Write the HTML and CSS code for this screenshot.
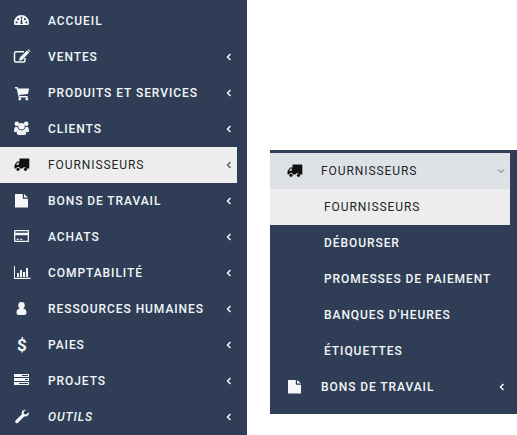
FILE: index.html
```html
<!DOCTYPE html>
<html lang="fr">
<head>
    <meta charset="UTF-8">
    <meta name="viewport" content="width=device-width, initial-scale=1.0">
    <title>Menu</title>
    <link rel="stylesheet" href="styles.css">
</head>
<body>
    <svg class="defs" aria-hidden="true">
        <symbol id="i-gauge" viewBox="0 0 18 16">
            <path fill-rule="evenodd" d="M8.500 2C4.400 2 1 5.300 1 9.500c0 1 .2 1.700.6 2.500h13.800c.4-.8.6-1.500.6-2.500C16 5.300 12.600 2 8.500 2zM7.600 3.800h1.800v1.800H7.600zM4.200 5.200H6V7H4.200zM11 5.200h1.800V7H11zM2.700 8.400h1.800v1.800H2.700zM12.500 8.400h1.800v1.800h-1.800zM7.700 8.500l.5-2.700h.6l.5 2.700.3 2.500H7.400z"/>
        </symbol>
        <symbol id="i-edit" viewBox="0 0 18 16">
            <path fill="none" stroke="currentColor" stroke-width="1.500" d="M11 2.800H3a1.500 1.500 0 0 0-1.500 1.500v7.200A1.500 1.500 0 0 0 3 13h7.500a1.500 1.500 0 0 0 1.500-1.500V9"/>
            <path d="M14 1.600l2.200 2-7 7.300-3.200.9.800-3.200zM14.700 1l.8-.7 2 2-.7.800z"/>
        </symbol>
        <symbol id="i-cart" viewBox="0 0 18 16">
            <path d="M2 2h2.600l.4 1.500h11.200l-1.300 5.500-8.600 1 .3 1h8.200v1.400H5.700L3.600 3.400H2z"/>
            <circle cx="6.800" cy="14" r="1.400"/>
            <circle cx="13.800" cy="14" r="1.400"/>
        </symbol>
        <symbol id="i-group" viewBox="0 0 18 16">
            <circle cx="3.800" cy="2.800" r="2.300"/>
            <circle cx="13.200" cy="2.800" r="2.300"/>
            <circle cx="8.500" cy="5.300" r="3.200"/>
            <path d="M1 10.200C1 7.500 1.800 5.800 3 5.800l1.500.5 1 2.200C4.500 9 3.800 10 3.700 11H1.500c-.3 0-.5-.4-.5-.8zM16 10.200c0-2.700-.8-4.400-2-4.400l-1.500.5-1 2.200c1 .5 1.700 1.500 1.800 2.500h2.200c.3 0 .5-.4.500-.8z"/>
            <path d="M5.500 8c.8.900 1.800 1.400 3 1.400s2.200-.5 3-1.400c1.100.4 1.700 2.200 1.700 4 0 1.300-.7 2-2 2H5.800c-1.300 0-2-.7-2-2 0-1.800.6-3.600 1.700-4z"/>
        </symbol>
        <symbol id="i-truck" viewBox="0 0 18 16">
            <path fill-rule="evenodd" d="M6.500 1.500h9.200a.6.6 0 0 1 .6.600v9.400h-3.100a2 2 0 0 0-3.700 0H7a2 2 0 0 0-2.600-1.200c-.9.300-1.300.7-1.500 1.200H2a.6.6 0 0 1-.5-.6V8l2.600-3.500h2.400zM3 7.800h2.800V5.600H4.600z"/>
            <circle cx="5" cy="12.300" r="1.600"/>
            <circle cx="12.500" cy="12.300" r="1.600"/>
        </symbol>
        <symbol id="i-file" viewBox="0 0 18 16">
            <path d="M2 1h7.800v4.700H15V14.500H2z"/>
            <path d="M11 1l4 3.500h-4z"/>
        </symbol>
        <symbol id="i-card" viewBox="0 0 18 16">
            <path fill-rule="evenodd" d="M2 1h13a1 1 0 0 1 1 1v10a1 1 0 0 1-1 1H2a1 1 0 0 1-1-1V2a1 1 0 0 1 1-1zM2.300 2.200v1.600h12.400V2.200zM2.300 6.300v5.500h12.400V6.300zM3.500 9.800h2.600v1H3.500zM7 9.800h2.500v1H7z"/>
        </symbol>
        <symbol id="i-chart" viewBox="0 0 18 16">
            <path d="M1 1h1v11.800h15.500V14H1zM4 8h2v4H4zM7 5h2v7H7zM10 7h2v5h-2zM13 3h2v9h-2z"/>
        </symbol>
        <symbol id="i-user" viewBox="0 0 18 16">
            <path d="M8.500 1a3.200 3.200 0 0 1 3.200 3.400c0 1.300-.6 2.400-1.500 3 2.200.3 3.300 1.900 3.300 4.200 0 1.300-.7 2.400-2 2.400H5.500c-1.300 0-2-1.100-2-2.400 0-2.300 1.100-3.900 3.300-4.200-.9-.6-1.500-1.700-1.500-3A3.200 3.200 0 0 1 8.500 1z"/>
        </symbol>
        <symbol id="i-server" viewBox="0 0 18 16">
            <path fill-rule="evenodd" d="M1 1h15v3H1zM9 2v1h6V2zM1 5h15v3H1zM12 6v1h3V6zM1 9h15v3H1zM6 10v1h9v-1z"/>
        </symbol>
        <symbol id="i-wrench" viewBox="0 0 18 16">
            <path d="M16 3.300c.3 2.400-1.300 4.300-3.500 4.300-.5 0-.9 0-1.300-.2l-6 6.200c-.7.800-1.800.8-2.500.1s-.7-1.800.1-2.500l6.100-6c-.2-.5-.3-1-.2-1.500.2-2 2-3.300 4.200-3l-2.300 2.200.5 2.100 2 .5z"/>
        </symbol>
        <symbol id="i-left" viewBox="0 0 6 8">
            <path fill="none" stroke="currentColor" stroke-width="1.500" d="M4.500 1L1.500 4l3 3"/>
        </symbol>
        <symbol id="i-down" viewBox="0 0 8 6">
            <path fill="none" stroke="currentColor" stroke-width="1" d="M1 1.500l3 3 3-3"/>
        </symbol>
    </svg>

    <nav class="menu sidebar">
        <a class="item"><svg class="icon"><use href="#i-gauge"/></svg><span>ACCUEIL</span></a>
        <a class="item"><svg class="icon"><use href="#i-edit"/></svg><span>VENTES</span><svg class="arrow"><use href="#i-left"/></svg></a>
        <a class="item"><svg class="icon"><use href="#i-cart"/></svg><span>PRODUITS ET SERVICES</span><svg class="arrow"><use href="#i-left"/></svg></a>
        <a class="item"><svg class="icon"><use href="#i-group"/></svg><span>CLIENTS</span><svg class="arrow"><use href="#i-left"/></svg></a>
        <a class="item active"><svg class="icon"><use href="#i-truck"/></svg><span>FOURNISSEURS</span><svg class="arrow"><use href="#i-left"/></svg></a>
        <a class="item"><svg class="icon"><use href="#i-file"/></svg><span>BONS DE TRAVAIL</span><svg class="arrow"><use href="#i-left"/></svg></a>
        <a class="item"><svg class="icon"><use href="#i-card"/></svg><span>ACHATS</span><svg class="arrow"><use href="#i-left"/></svg></a>
        <a class="item"><svg class="icon"><use href="#i-chart"/></svg><span>COMPTABILITÉ</span><svg class="arrow"><use href="#i-left"/></svg></a>
        <a class="item"><svg class="icon"><use href="#i-user"/></svg><span>RESSOURCES HUMAINES</span><svg class="arrow"><use href="#i-left"/></svg></a>
        <a class="item"><span class="icon dollar">$</span><span>PAIES</span><svg class="arrow"><use href="#i-left"/></svg></a>
        <a class="item"><svg class="icon"><use href="#i-server"/></svg><span>PROJETS</span><svg class="arrow"><use href="#i-left"/></svg></a>
        <a class="item"><svg class="icon"><use href="#i-wrench"/></svg><span class="tools">OUTILS</span><svg class="arrow"><use href="#i-left"/></svg></a>
    </nav>

    <nav class="menu panel">
        <a class="item open"><svg class="icon"><use href="#i-truck"/></svg><span>FOURNISSEURS</span><svg class="arrow arrow-down"><use href="#i-down"/></svg></a>
        <a class="item sub active">FOURNISSEURS</a>
        <a class="item sub">DÉBOURSER</a>
        <a class="item sub">PROMESSES DE PAIEMENT</a>
        <a class="item sub">BANQUES D'HEURES</a>
        <a class="item sub">ÉTIQUETTES</a>
        <a class="item"><svg class="icon"><use href="#i-file"/></svg><span>BONS DE TRAVAIL</span><svg class="arrow"><use href="#i-left"/></svg></a>
    </nav>
</body>
</html>
```

FILE: styles.css
```css
html, body {
    height: 100%;
}

body {
    margin: 0;
    display: flex;
    align-items: flex-start;
    overflow: hidden;
    background-color: #fff;
    font-family: Roboto, "Liberation Sans", sans-serif;
}

.defs {
    display: none;
}

.menu {
    display: flex;
    flex-direction: column;
    width: 247px;
    padding-top: 3px;
    box-sizing: border-box;
    background-color: #2f3e56;
}

.sidebar {
    height: 435px;
    padding-right: 10px;
}

.panel {
    margin: 150px 0 0 23px;
    height: 264px;
    padding-right: 7px;
}

.item {
    display: flex;
    align-items: center;
    flex: none;
    height: 36px;
    padding-left: 13px;
    padding-right: 5px;
    color: #f4f6f8;
    font-size: 12px;
    font-weight: 500;
    letter-spacing: 0.93px;
}

.panel .item {
    padding-left: 16px;
}

.panel .sub {
    padding-left: 54px;
}

.active {
    background-color: #ededed;
    color: #212529;
    font-weight: 400;
}

.open {
    background-color: #dee2e6;
    color: #212529;
    font-weight: 400;
}

.active .icon,
.open .icon {
    color: #111;
}

.icon {
    flex: none;
    width: 18px;
    height: 16px;
    margin-right: 17px;
    fill: currentColor;
}

.dollar {
    font-size: 17px;
    font-weight: 700;
    line-height: 16px;
    letter-spacing: 0;
    text-align: center;
}

.tools {
    font-style: italic;
}

.arrow {
    flex: none;
    width: 6px;
    height: 8px;
    margin-left: auto;
    fill: currentColor;
}

.active .arrow {
    color: #55636f;
}

.arrow-down {
    width: 8px;
    height: 6px;
    color: #55636f;
}
```
